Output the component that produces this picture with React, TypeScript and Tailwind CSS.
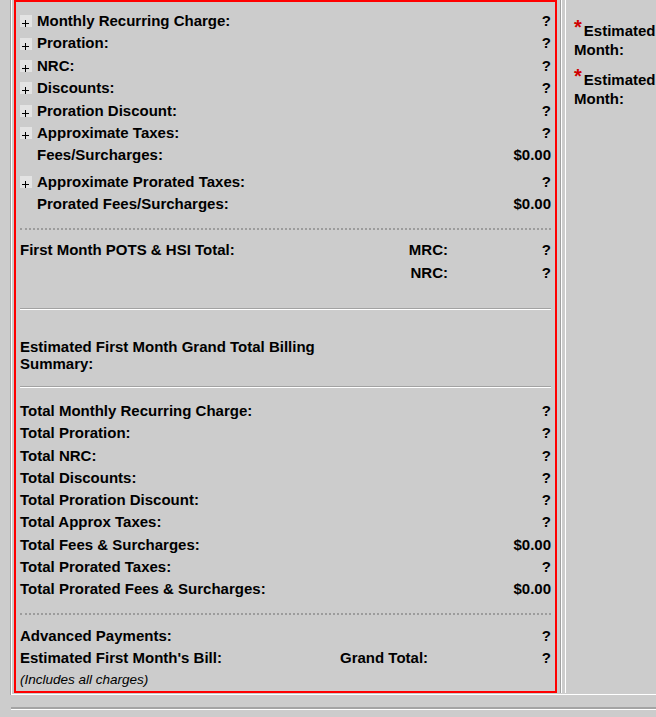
import React from "react";

type Line = { label: string; value: string; plus?: boolean; indent?: boolean };

const charges: Line[] = [
  { label: "Monthly Recurring Charge:", value: "?", plus: true },
  { label: "Proration:", value: "?", plus: true },
  { label: "NRC:", value: "?", plus: true },
  { label: "Discounts:", value: "?", plus: true },
  { label: "Proration Discount:", value: "?", plus: true },
  { label: "Approximate Taxes:", value: "?", plus: true },
  { label: "Fees/Surcharges:", value: "$0.00", indent: true },
];

const prorated: Line[] = [
  { label: "Approximate Prorated Taxes:", value: "?", plus: true },
  { label: "Prorated Fees/Surcharges:", value: "$0.00", indent: true },
];

const totals: Line[] = [
  { label: "Total Monthly Recurring Charge:", value: "?" },
  { label: "Total Proration:", value: "?" },
  { label: "Total NRC:", value: "?" },
  { label: "Total Discounts:", value: "?" },
  { label: "Total Proration Discount:", value: "?" },
  { label: "Total Approx Taxes:", value: "?" },
  { label: "Total Fees & Surcharges:", value: "$0.00" },
  { label: "Total Prorated Taxes:", value: "?" },
  { label: "Total Prorated Fees & Surcharges:", value: "$0.00" },
];

function PlusIcon() {
  return (
    <svg width="12" height="12" viewBox="0 0 12 12" className="shrink-0">
      <rect width="12" height="12" fill="#e3e3e3" />
      <path d="M2 8.5H9M5.5 5V12" stroke="#000" strokeWidth="1" />
    </svg>
  );
}

function Row({ line, h }: { line: Line; h: string }) {
  return (
    <div className={`flex items-center ${h}`}>
      {line.plus ? <PlusIcon /> : line.indent ? <span className="w-[12px] shrink-0" /> : null}
      <span className={line.plus || line.indent ? "ml-[5px]" : ""}>{line.label}</span>
      <span className="ml-auto">{line.value}</span>
    </div>
  );
}

function Dotted({ className }: { className: string }) {
  return <div className={`border-t-2 border-dotted border-[#9c9c9c] ${className}`} />;
}

function Rule({ className }: { className: string }) {
  return <div className={`border-t border-b border-t-[#a2a2a2] border-b-white ${className}`} />;
}

function Required({ text }: { text: string }) {
  return (
    <div>
      <span className="mr-[2px] text-[20px] leading-[0] text-[#d00000] align-[2px]">*</span>
      {text}
    </div>
  );
}

export default function App() {
  return (
    <div className="w-[656px] h-[717px] overflow-hidden bg-[#cccccc] text-black font-['Liberation_Sans',Arial,sans-serif]">
      <div className="ml-[10px] w-max border-l border-[#a0a0a0]">
        <div className="flex border-l border-b border-white pb-[1px]">
          {/* left: charges summary */}
          <div className="pl-[2px] pr-[3px] border-r border-[#a0a0a0]">
            <div className="w-[543px] h-[693px] overflow-hidden border-2 border-[#ff0000] px-[4px] pt-[8px] text-[15px] font-bold">
              {charges.map((l) => (
                <Row key={l.label} line={l} h="h-[22.4px]" />
              ))}
              <div className="mt-[4px]">
                {prorated.map((l) => (
                  <Row key={l.label} line={l} h="h-[22.4px]" />
                ))}
              </div>

              <Dotted className="mt-[12px]" />

              <div className="mt-[10px]">
                <div className="flex items-center h-[22.4px]">
                  <span className="flex-1">First Month POTS &amp; HSI Total:</span>
                  <span>MRC:</span>
                  <span className="w-[103px] text-right">?</span>
                </div>
                <div className="flex items-center h-[22.4px]">
                  <span className="flex-1" />
                  <span>NRC:</span>
                  <span className="w-[103px] text-right">?</span>
                </div>
              </div>

              <Rule className="mt-[24px]" />

              <div className="mt-[28px] w-[320px] leading-[17px]">
                Estimated First Month Grand Total Billing Summary:
              </div>

              <Rule className="mt-[14px]" />

              <div className="mt-[12px]">
                {totals.map((l) => (
                  <Row key={l.label} line={l} h="h-[22.25px]" />
                ))}
              </div>

              <Dotted className="mt-[12px]" />

              <div className="mt-[11px]">
                <div className="flex items-center h-[22px]">
                  <span>Advanced Payments:</span>
                  <span className="ml-auto">?</span>
                </div>
                <div className="flex items-center h-[22px]">
                  <span className="w-[320px]">Estimated First Month's Bill:</span>
                  <span>Grand Total:</span>
                  <span className="ml-auto">?</span>
                </div>
                <div className="flex items-center h-[22px] text-[13.5px] font-normal italic">
                  (Includes all charges)
                </div>
              </div>
            </div>
          </div>

          <div className="w-[5px] border-x border-white" />

          {/* right: estimates */}
          <div className="w-[150px] pl-[8px] pt-[21px] text-[15px] font-bold leading-[19px]">
            <Required text="Estimated First Month:" />
            <div className="mt-[11px]">
              <Required text="Estimated Second Month:" />
            </div>
          </div>
        </div>
      </div>

      <div className="ml-[11px] mt-[12px] border-t-2 border-b border-t-[#a4a4a4] border-b-white" />
    </div>
  );
}
